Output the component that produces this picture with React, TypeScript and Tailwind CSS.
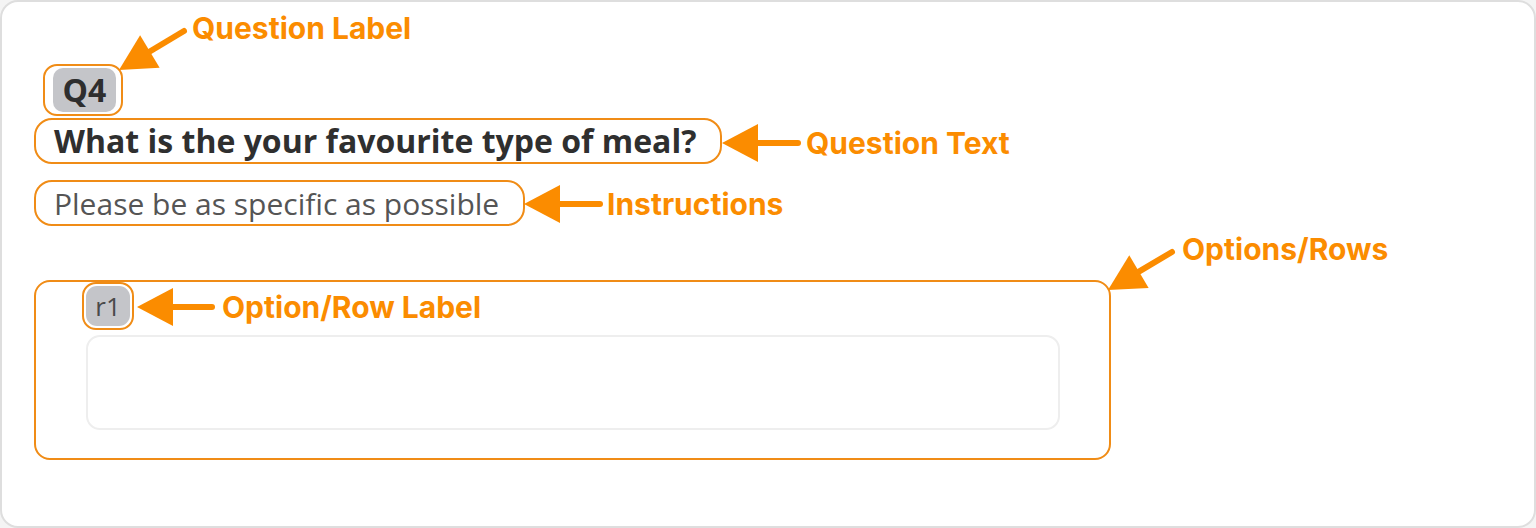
const ORANGE = '#fb8c00'

function Arrow({ x1, y1, x2, y2 }: { x1: number; y1: number; x2: number; y2: number }) {
  // shaft from (x1,y1), head tip at (x2,y2)
  const dx = x2 - x1
  const dy = y2 - y1
  const len = Math.hypot(dx, dy)
  const ux = dx / len
  const uy = dy / len
  const headLen = 36
  const headHalf = 19
  const bx = x2 - ux * headLen
  const by = y2 - uy * headLen
  const p1 = `${bx - uy * headHalf},${by + ux * headHalf}`
  const p2 = `${bx + uy * headHalf},${by - ux * headHalf}`
  return (
    <g>
      <line x1={x1} y1={y1} x2={bx + ux * 4} y2={by + uy * 4} stroke={ORANGE} strokeWidth={6} strokeLinecap="round" />
      <polygon points={`${x2},${y2} ${p1} ${p2}`} fill={ORANGE} />
    </g>
  )
}

export default function App() {
  return (
    <div className="w-[1536px] h-[528px] bg-[#f4f4f4] relative" style={{ fontFamily: '"Open Sans", sans-serif' }}>
      <div className="w-[1536px] h-[528px] bg-white border-2 border-[#dedede] rounded-[18px] pl-[32px] pt-[62px] flex flex-col items-start">
        {/* question label */}
        <div className="ml-[9px] flex border-2 border-[#f08c16] rounded-[14px] pl-[8px] pr-[5px] py-[2px]">
          <div className="bg-[#c4c5c9] rounded-[10px] w-[63px] h-[44px] flex items-center justify-center text-[32px] font-bold text-[#2e2e2e]">
            Q4
          </div>
        </div>

        {/* question text */}
        <div className="mt-[2px] flex items-center border-2 border-[#f08c16] rounded-[18px] h-[46px] pl-[18px] pr-[24px] text-[32px] font-bold text-[#2f2f2f]">
          What is the your favourite type of meal?
        </div>

        {/* instructions */}
        <div className="mt-[16px] flex items-center border-2 border-[#f08c16] rounded-[18px] h-[46px] pl-[18px] pr-[24px] text-[30px] text-[#555555]">
          Please be as specific as possible
        </div>

        {/* options / rows */}
        <div className="mt-[54px] w-[1077px] h-[180px] border-2 border-[#f08c16] rounded-[16px] pl-[46px] flex flex-col items-start">
          <div className="flex border-2 border-[#f08c16] rounded-[14px] p-[2px]">
            <div className="bg-[#c4c5c9] rounded-[11px] w-[44px] h-[40px] flex items-center justify-center text-[26px] text-[#4a4a4a]">
              r1
            </div>
          </div>
          <div className="mt-[5px] ml-[4px] w-[974px] h-[95px] border-2 border-[#eeeeee] rounded-[14px] bg-white" />
        </div>
      </div>

      {/* annotations */}
      <svg className="absolute left-0 top-0 pointer-events-none" width={1536} height={528}>
        <Arrow x1={184} y1={31} x2={119} y2={70} />
        <Arrow x1={798} y1={143} x2={722} y2={143} />
        <Arrow x1={600} y1={204} x2={524} y2={204} />
        <Arrow x1={212} y1={307} x2={137} y2={307} />
        <Arrow x1={1172} y1={252} x2={1108} y2={290} />
      </svg>
      <div className="absolute inset-0 pointer-events-none text-[#fb8c00] font-bold text-[30px] leading-[36px]" style={{ fontFamily: 'Inter, sans-serif' }}>
        <div className="absolute left-[192px] top-[10px]">Question Label</div>
        <div className="absolute left-[806px] top-[125px]">Question Text</div>
        <div className="absolute left-[607px] top-[186px]">Instructions</div>
        <div className="absolute left-[1182px] top-[231px]">Options/Rows</div>
        <div className="absolute left-[222px] top-[289px]">Option/Row Label</div>
      </div>
    </div>
  )
}
